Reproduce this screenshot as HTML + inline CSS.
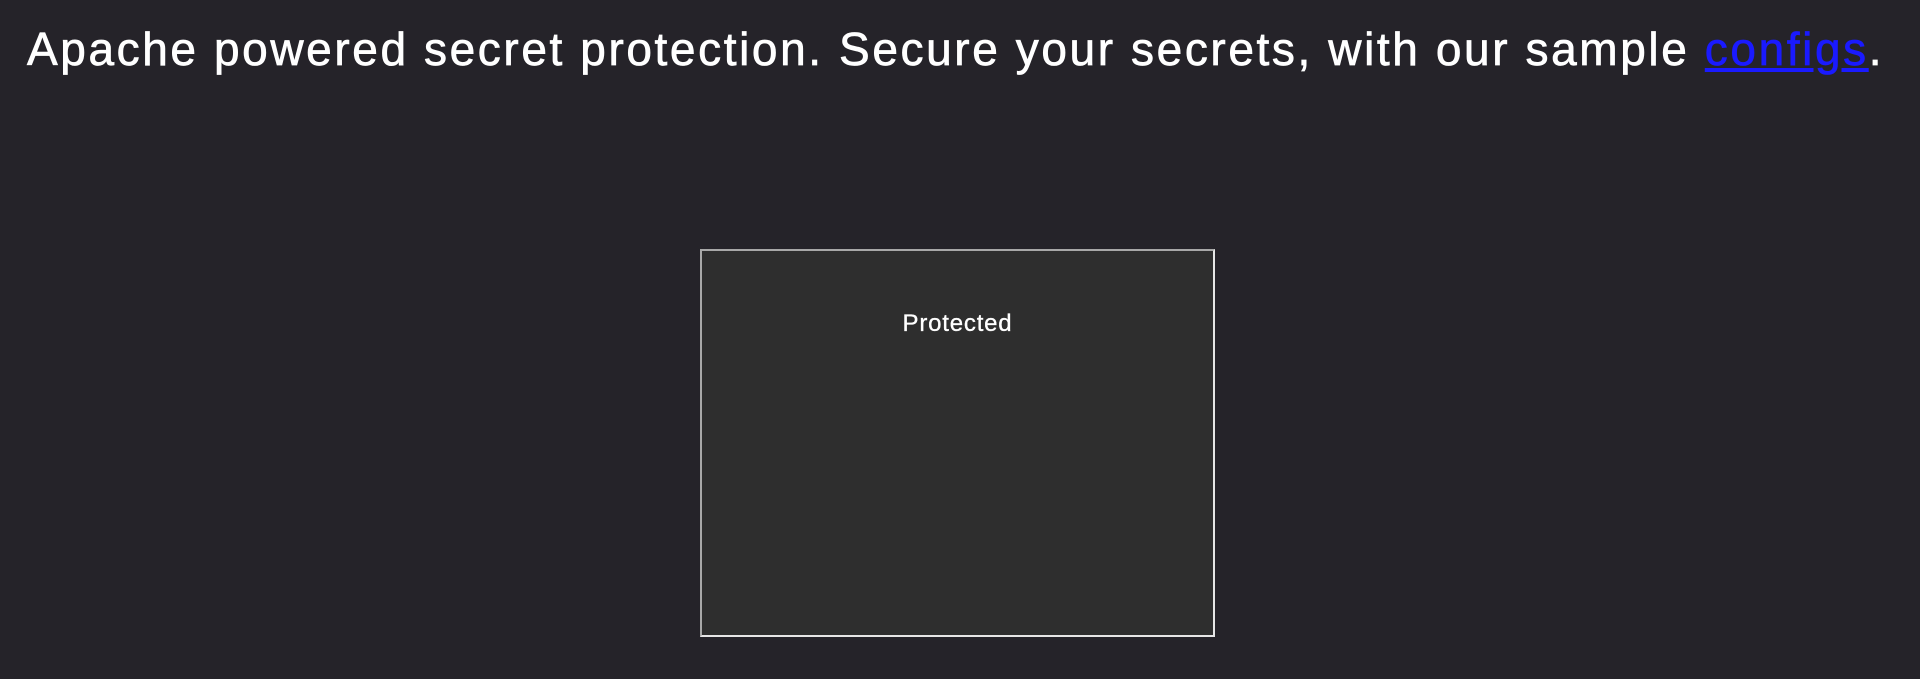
<!DOCTYPE html>
<html><head><meta charset="utf-8"><style>
html,body{margin:0;padding:0;background:#252329;width:1920px;height:679px;overflow:hidden}
h1{position:absolute;left:27px;top:19px;margin:0;font:400 46px/60px "Liberation Sans",sans-serif;letter-spacing:2.6px;color:#fff;white-space:nowrap;-webkit-text-stroke:0.7px #fff}
h1 a{color:#1a1aff;text-decoration:underline;-webkit-text-stroke:0.7px #1a1aff}
.box{position:absolute;left:700px;top:249px;width:511px;height:384px;background:#2e2e2e;border:2px solid;border-color:#a8a8a8 #e6e6e6 #e6e6e6 #a8a8a8}
.box p{margin:0;position:absolute;left:0;right:0;top:59px;text-align:center;font:400 24px "Liberation Sans",sans-serif;letter-spacing:0.8px;color:#fff;-webkit-text-stroke:0.3px #fff}
</style></head><body>
<h1>Apache powered secret protection. Secure your secrets, with our sample <a>configs</a>.</h1>
<div class="box"><p>Protected</p></div>
</body></html>
